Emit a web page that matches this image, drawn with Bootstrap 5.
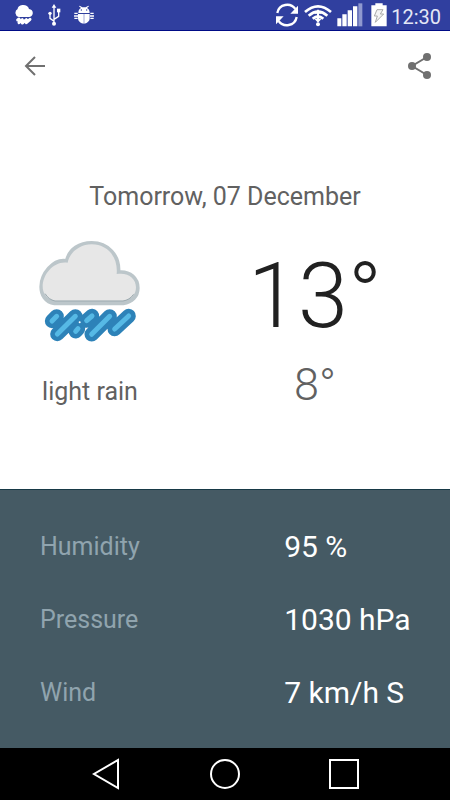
<!DOCTYPE html>
<html lang="en">
<head>
<meta charset="utf-8">
<meta name="viewport" content="width=device-width, initial-scale=1">
<title>Weather details</title>
<link rel="stylesheet" href="https://cdn.jsdelivr.net/npm/bootstrap@5.3.0/dist/css/bootstrap.min.css">
<style>
body { font-family: Roboto, "Liberation Sans", sans-serif; color: #616161; }
svg { display: block; }
.status-bar { background: #303f9f; height: 31px; border-bottom: 1px solid #000b86; padding: 0 9px 0 14px; }
.clock { font-size: 20px; line-height: 30px; padding-top: 3px; color: #e4e7f6; }
.toolbar { height: 70px; padding: 0 10px 0 15px; }
.tool-btn { width: 40px; height: 40px; color: #707070; }
.forecast { padding-top: 81px; }
.day-title, .condition, .detail-label { font-size: 25px; line-height: 30px; font-weight: 400; }
.forecast-cols { margin-top: 18px; }
.sky-col { flex: 2 1 0; }
.temp-col { flex: 3 1 0; }
.condition { margin-top: 27px; }
.temp-high { font-size: 90px; line-height: 106px; font-weight: 300; color: #212121; margin-top: 14px; }
.temp-low { font-size: 45px; line-height: 54px; font-weight: 300; margin-top: 8px; }
.details { background: #455a64; border-top: 1px solid #173946; padding: 20px 0 19px 40px; }
.detail-row { height: 73px; padding-right: 40px; }
.detail-label { width: 66%; color: #90a4ae; }
.detail-value { font-size: 30px; line-height: 36px; color: #fff; }
.system-nav { background: #000; height: 52px; padding: 0 47px; }
</style>
<script defer src="https://cdn.jsdelivr.net/npm/bootstrap@5.3.0/dist/js/bootstrap.bundle.min.js"></script>
</head>
<body class="bg-white">
<div class="d-flex flex-column min-vh-100">
  <div class="status-bar d-flex align-items-center justify-content-between">
    <div class="d-flex align-items-center">
      <svg width="20" height="22" viewBox="42 14 60 66" fill="#fff" aria-hidden="true">
        <path d="M56 53a13 13 0 0 1-3-24C54 14 84 12 87 29c14 1 16 20 1 24z"/>
        <path d="M53 62l4-3M57 70l10-9M67 71l12-10M79 70l11-10" stroke="#fff" stroke-width="9" stroke-linecap="round"/>
      </svg>
      <svg class="ms-2" width="24" height="24" viewBox="124 11 72 72" fill="none" stroke="#fff" stroke-width="4" aria-hidden="true">
        <path d="M160 20v54M160 66l-12-9V43M160 60l14-9V34"/>
        <path d="M160 14l7 11h-14z" fill="#fff" stroke="none"/>
        <circle cx="160" cy="73" r="6" fill="#fff" stroke="none"/><circle cx="148" cy="42" r="5" fill="#fff" stroke="none"/><path d="M169 28h10v11h-10z" fill="#fff" stroke="none"/>
      </svg>
      <svg class="ms-2" width="22" height="22" viewBox="222 14 66 66" fill="#fff" aria-hidden="true">
        <path d="M235 41c0-8 3-12 8-15l-6-5 2-2 8 5h10l8-5 2 2-6 5c5 3 8 7 8 15z"/>
        <path d="M234 44h35v12c0 22-35 22-35 0z"/>
        <path d="M223 42h10M222 50h12M223 57h10M271 42h10M270 50h12M271 57h10" stroke="#fff" stroke-width="4"/>
        <path d="M252 44v28" stroke="#7580c4" stroke-width="2"/><circle cx="244" cy="32" r="2" fill="#303f9f"/><circle cx="260" cy="32" r="2" fill="#303f9f"/>
      </svg>
    </div>
    <div class="d-flex align-items-center">
      <svg width="24" height="24" viewBox="18 11 72 72" fill="none" stroke="#fff" stroke-width="7" aria-hidden="true">
        <path d="M25 41C30 13 65 9 79 29M83 53C78 81 43 85 29 65"/>
        <path d="M87 19v24H64zM21 75V51h23z" fill="#fff" stroke="none"/>
      </svg>
      <svg class="ms-1" width="30" height="24" viewBox="103 11 90 72" fill="none" stroke="#fff" aria-hidden="true">
        <path d="M109 38q39-34 78 0M120 49q28-24 56 0" stroke-width="8"/>
        <path d="M132 58q16-13 32 0" stroke-width="8"/>
        <path d="M148 30l11 13h-22zM148 70l-11-12h22z" fill="#fff" stroke="none"/><path d="M148 40v26" stroke-width="6"/><circle cx="148" cy="75" r="6" fill="#fff" stroke="none"/>
      </svg>
      <svg class="ms-1" width="26" height="24" viewBox="203 11 78 72" fill="#fff" aria-hidden="true">
        <path d="M204 57h12v24h-12zM219 45h13v36h-13zM235 33h13v48h-13zM251 21h13v60h-13z"/><path d="M267 12h12v69h-12z" fill="#8f98cf"/>
      </svg>
      <svg class="ms-2" width="16" height="24" viewBox="299 11 48 72" aria-hidden="true">
        <path d="M312 12h22v6h12v63h-46V18h12z" fill="#fff"/>
        <path d="M317 31h18l-8 13h10l-25 25 6-19h-9z" fill="#f4f4f4" stroke="#aaa" stroke-width="3"/>
      </svg>
      <time class="clock ms-1">12:30</time>
    </div>
  </div>

  <header class="toolbar d-flex align-items-center justify-content-between">
    <button type="button" class="tool-btn btn border-0 p-0 d-flex align-items-center justify-content-center" aria-label="Back">
      <svg width="24" height="24" viewBox="0 0 24 24" fill="none" stroke="currentColor" stroke-width="2" aria-hidden="true"><path d="M22 12H4M12 3l-9 9 9 9"/></svg>
    </button>
    <button type="button" class="tool-btn btn border-0 p-0 d-flex align-items-center justify-content-center" aria-label="Share">
      <svg width="26" height="26" viewBox="0 0 26 26" fill="currentColor" aria-hidden="true"><path d="M20 4L5 13l15 9" fill="none" stroke="currentColor" stroke-width="2"/><circle cx="20" cy="4" r="4"/><circle cx="5" cy="13" r="4"/><circle cx="20" cy="22" r="4"/></svg>
    </button>
  </header>

  <main class="forecast flex-grow-1">
    <h1 class="day-title text-center mb-0">Tomorrow, 07 December</h1>
    <div class="forecast-cols d-flex text-center">
      <div class="sky-col d-flex flex-column align-items-center">
        <svg width="120" height="120" viewBox="0 0 360 360" fill="none" stroke-linecap="round" role="img" aria-label="Rain cloud">
          <path d="M73 222C45 218 32 195 32 170C32 133 68 84 109 91C117 56 149 37 185 37C235 37 270 76 267 125C302 122 325 145 325 174C325 201 306 218 280 222Z" fill="#bcc6ca" stroke="#bcc6ca" stroke-width="8"/>
          <path d="M75 212C49 207 38 191 38 169C38 132 73 91 113 98C119 66 151 43 185 43C232 43 265 81 260 132C295 126 318 146 318 172C318 195 302 209 279 212Z" fill="#e7e7e7"/>
          <path d="M46 192Q56 209 75 213H279Q299 210 310 194" stroke="#9caab0" stroke-width="3"/>
          <path d="M66 273l14-14M82 312l54-53M137 304l7-8M170 272l16-14M185 313l54-54M254 297l42-39" stroke="#2d82b8" stroke-width="43"/>
          <path d="M66 273l14-14M82 312l54-53M137 304l7-8M170 272l16-14M185 313l54-54M254 297l42-39" stroke="#56b9e5" stroke-width="15"/>
          <circle cx="149" cy="277" r="3" fill="#fff"/>
        </svg>
        <p class="condition mb-0">light rain</p>
      </div>
      <div class="temp-col">
        <div class="temp-high">13°</div>
        <div class="temp-low">8°</div>
      </div>
    </div>
  </main>

  <dl class="details mb-0">
    <div class="detail-row d-flex align-items-center"><dt class="detail-label flex-shrink-0">Humidity</dt><dd class="detail-value mb-0 text-nowrap">95 %</dd></div>
    <div class="detail-row d-flex align-items-center"><dt class="detail-label flex-shrink-0">Pressure</dt><dd class="detail-value mb-0 text-nowrap">1030 hPa</dd></div>
    <div class="detail-row d-flex align-items-center"><dt class="detail-label flex-shrink-0">Wind</dt><dd class="detail-value mb-0 text-nowrap">7 km/h S</dd></div>
  </dl>

  <nav class="system-nav d-flex" aria-label="System">
    <button type="button" class="btn border-0 p-0 flex-fill d-flex align-items-center justify-content-center" aria-label="Back"><svg width="32" height="32" viewBox="0 0 32 32" fill="none" stroke="#fff" stroke-width="2" aria-hidden="true"><path d="M28 2v28L4 16z"/></svg></button>
    <button type="button" class="btn border-0 p-0 flex-fill d-flex align-items-center justify-content-center" aria-label="Home"><svg width="32" height="32" viewBox="0 0 32 32" fill="none" stroke="#fff" stroke-width="2" aria-hidden="true"><circle cx="16" cy="16" r="14"/></svg></button>
    <button type="button" class="btn border-0 p-0 flex-fill d-flex align-items-center justify-content-center" aria-label="Recent apps"><svg width="32" height="32" viewBox="0 0 32 32" fill="none" stroke="#fff" stroke-width="2" aria-hidden="true"><path d="M2 2h28v28H2z"/></svg></button>
  </nav>
</div>
</body>
</html>
